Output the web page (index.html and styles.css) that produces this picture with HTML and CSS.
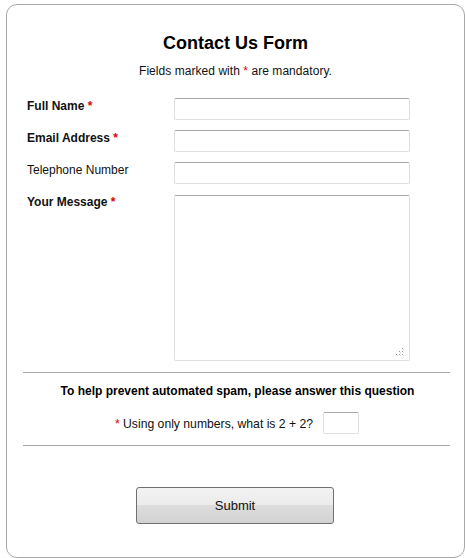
FILE: index.html
```html
<!DOCTYPE html>
<html>
<head>
<meta charset="utf-8">
<link rel="stylesheet" href="styles.css">
</head>
<body>
<div class="card">
  <h1 class="title">Contact Us Form</h1>
  <p class="note">Fields marked with <span class="req">*</span> are mandatory.</p>
  <form class="fields">
    <label class="lbl strong">Full Name <span class="req">*</span></label>
    <input class="field" type="text">
    <label class="lbl strong">Email Address <span class="req">*</span></label>
    <input class="field" type="text">
    <label class="lbl">Telephone Number</label>
    <input class="field" type="text">
    <label class="lbl strong msg-lbl">Your Message <span class="req">*</span></label>
    <div class="area-wrap">
      <textarea class="area"></textarea>
      <svg class="grip" width="9" height="9" viewBox="0 0 9 9">
        <rect x="7" y="1" width="1" height="1" fill="#9a9a9a"/>
        <rect x="4" y="4" width="1" height="1" fill="#9a9a9a"/>
        <rect x="7" y="4" width="1" height="1" fill="#9a9a9a"/>
        <rect x="1" y="7" width="1" height="1" fill="#9a9a9a"/>
        <rect x="4" y="7" width="1" height="1" fill="#9a9a9a"/>
        <rect x="7" y="7" width="1" height="1" fill="#9a9a9a"/>
        <rect x="8" y="2" width="1" height="1" fill="#d8d8d8"/>
        <rect x="5" y="5" width="1" height="1" fill="#d8d8d8"/>
        <rect x="8" y="5" width="1" height="1" fill="#d8d8d8"/>
        <rect x="2" y="8" width="1" height="1" fill="#d8d8d8"/>
        <rect x="5" y="8" width="1" height="1" fill="#d8d8d8"/>
        <rect x="8" y="8" width="1" height="1" fill="#d8d8d8"/>
      </svg>
    </div>
  </form>
  <div class="spam">
    <p class="spam-title">To help prevent automated spam, please answer this question</p>
    <div class="spam-row">
      <span class="spam-q"><span class="req">*</span> Using only numbers, what is 2 + 2?</span>
      <input class="answer" type="text">
    </div>
  </div>
  <div class="actions">
    <button class="submit" type="button">Submit</button>
  </div>
</div>
</body>
</html>
```

FILE: styles.css
```css
html, body {
  margin: 0;
  padding: 0;
  background: #fff;
}
body {
  padding: 4px 0 0 6px;
  font-family: "Liberation Sans", Arial, sans-serif;
  color: #111;
}
.card {
  box-sizing: border-box;
  width: 459px;
  height: 554px;
  border: 1px solid #a8a8a8;
  border-radius: 11px;
  padding-top: 27px;
}
.title {
  margin: 0;
  font-size: 18px;
  line-height: 22px;
  font-weight: bold;
  text-align: center;
  color: #000;
}
.note {
  margin: 10px 0 0;
  font-size: 12px;
  line-height: 14px;
  text-align: center;
  letter-spacing: 0.05px;
}
.req {
  color: #e00000;
}
.fields {
  margin: 20px 0 0 20px;
  display: grid;
  grid-template-columns: 147px 236px;
  row-gap: 10px;
  align-items: start;
}
.lbl {
  font-size: 12px;
  line-height: 14px;
  padding-top: 1px;
}
.strong {
  font-weight: bold;
}
.msg-lbl {
  padding-top: 1px;
}
.field, .area, .answer {
  box-sizing: border-box;
  margin: 0;
  border: 1px solid #e0e0e0;
  border-top-color: #a9a9a9;
  border-radius: 2px;
  background: #fff;
  font-family: "Liberation Sans", Arial, sans-serif;
  outline: none;
}
.field {
  width: 236px;
  height: 22px;
}
.area-wrap {
  position: relative;
  width: 236px;
  height: 166px;
  margin-top: 1px;
}
.area {
  display: block;
  width: 236px;
  height: 166px;
  resize: none;
}
.grip {
  position: absolute;
  right: 6px;
  bottom: 5px;
}
.spam {
  margin: 11px 14px 0 16px;
  border-top: 1px solid #a8a8a8;
  border-bottom: 1px solid #a8a8a8;
  padding: 11px 0 11px;
  text-align: center;
}
.spam-title {
  margin: 0;
  font-size: 12px;
  line-height: 14px;
  font-weight: bold;
  color: #000;
  padding-left: 2px;
}
.spam-row {
  margin-top: 14px;
  display: flex;
  justify-content: center;
  align-items: center;
  gap: 10px;
  padding-left: 1px;
}
.spam-q {
  font-size: 12.2px;
  line-height: 15px;
  padding-top: 2px;
}
.answer {
  width: 36px;
  height: 22px;
}
.actions {
  margin-top: 41px;
  display: flex;
  justify-content: center;
  padding-right: 1px;
}
.submit {
  box-sizing: border-box;
  width: 198px;
  height: 37px;
  border: 1px solid #707070;
  border-radius: 3px;
  background: linear-gradient(to bottom, #f2f2f2 0%, #ebebeb 50%, #dddddd 50%, #d2d2d2 100%);
  font-family: "Liberation Sans", Arial, sans-serif;
  font-size: 13px;
  color: #111;
  padding: 0;
}
```
